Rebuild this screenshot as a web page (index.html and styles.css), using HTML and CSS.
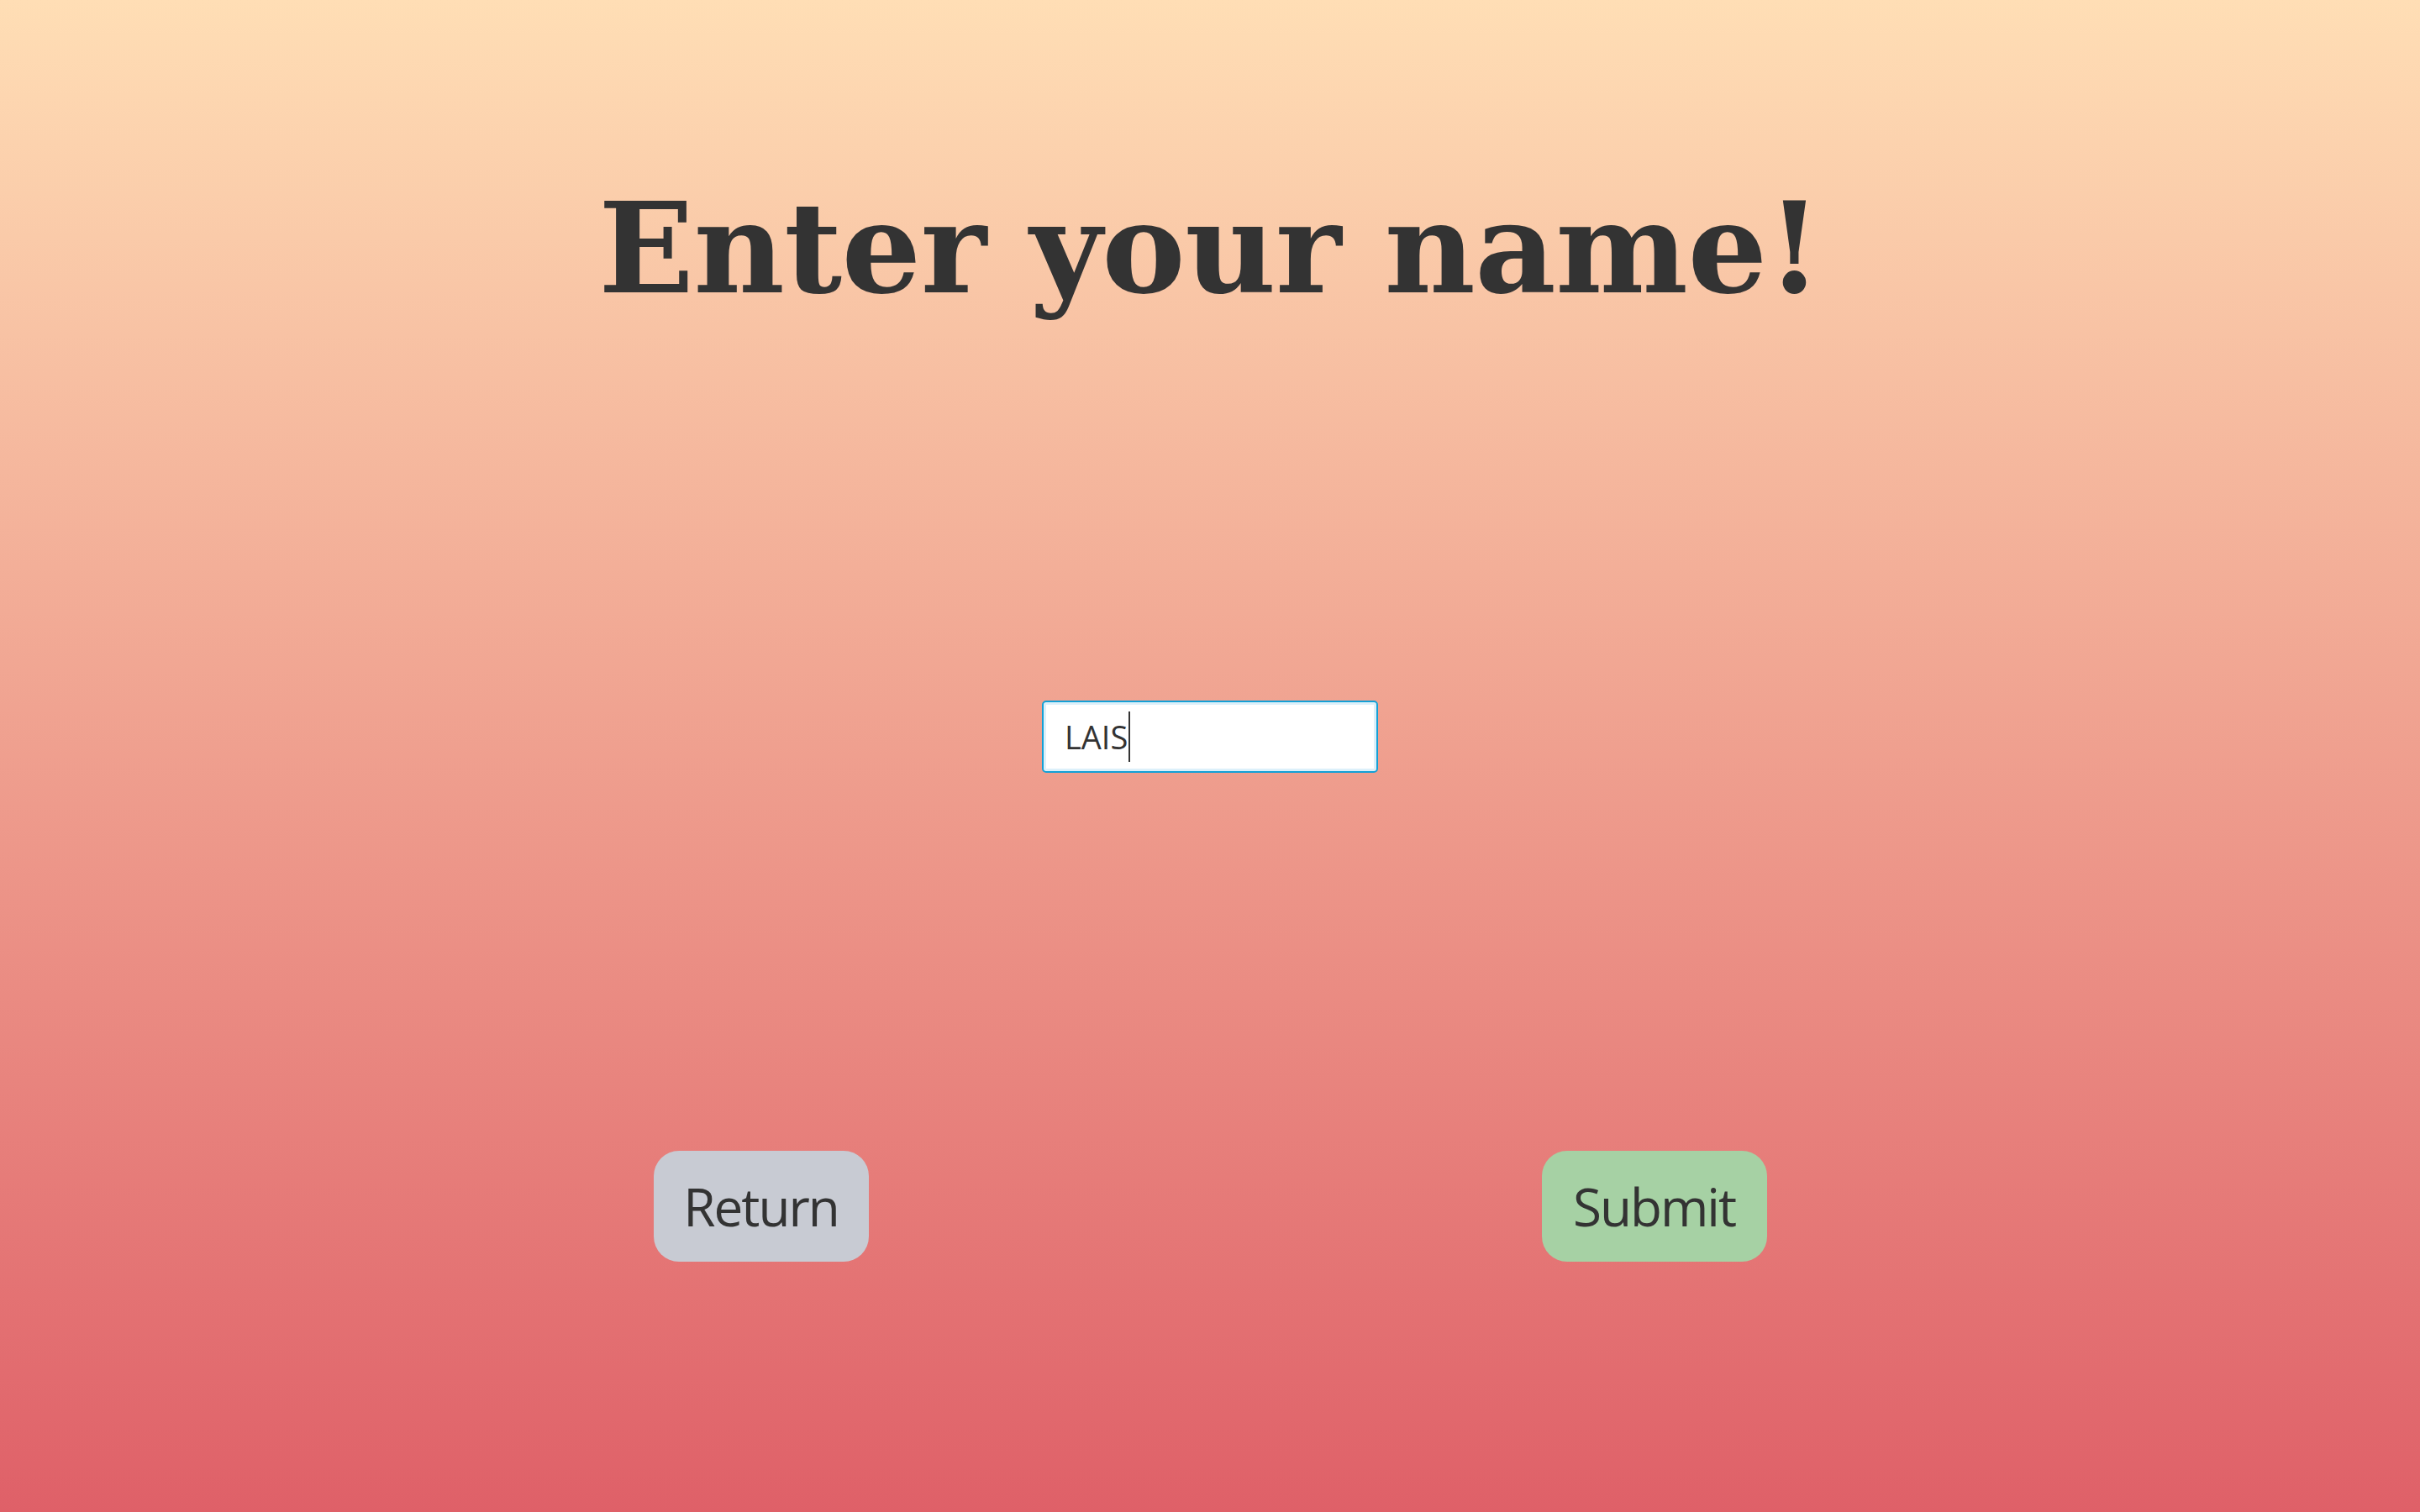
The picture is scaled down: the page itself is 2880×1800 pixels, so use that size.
FILE: index.html
```html
<!DOCTYPE html>
<html lang="en">
<head>
<meta charset="utf-8">
<title>Enter your name</title>
<link rel="stylesheet" href="styles.css">
</head>
<body>
<main class="page">
  <h1 class="title">Enter your name!</h1>
  <div class="name-field" role="textbox" aria-label="Name"><span class="name-value">LAIS</span><span class="caret"></span></div>
  <div class="actions">
    <button class="btn btn-return" type="button">Return</button>
    <button class="btn btn-submit" type="button">Submit</button>
  </div>
</main>
</body>
</html>
```
FILE: styles.css
```css
html, body {
  margin: 0;
  padding: 0;
}
body {
  width: 2880px;
  height: 1800px;
  background: linear-gradient(to bottom, #ffdeb5 0%, #df6068 100%);
  color: #333333;
  overflow: hidden;
}
.page {
  display: flex;
  flex-direction: column;
  align-items: center;
  padding-top: 212px;
  box-sizing: border-box;
  height: 1800px;
}
.title {
  margin: 0;
  font-family: "DejaVu Serif", "Liberation Serif", serif;
  font-weight: 700;
  font-size: 149px;
  line-height: 168px;
  letter-spacing: -0.5px;
  color: #333333;
  white-space: nowrap;
}
.name-field {
  margin-top: 454px;
  box-sizing: border-box;
  width: 400px;
  height: 86px;
  border: 2px solid #14a0d6;
  border-radius: 5px;
  background: #ffffff;
  box-shadow: inset 0 0 0 3px #dcf0fa;
  display: flex;
  align-items: center;
  padding: 0 0 0 25px;
  font-family: "Open Sans", "Noto Sans", sans-serif;
  font-size: 38px;
  color: #333333;
}
.name-value {
  line-height: 1;
}
.caret {
  display: inline-block;
  width: 2px;
  height: 60px;
  background: #333333;
  margin-left: 1px;
}
.actions {
  margin-top: 450px;
  width: 1325px;
  display: flex;
  justify-content: space-between;
}
.btn {
  height: 132px;
  border: none;
  border-radius: 30px;
  font-family: "Open Sans", "Noto Sans", sans-serif;
  font-size: 62px;
  letter-spacing: -2px;
  color: #333333;
  padding: 0;
  cursor: pointer;
}
.btn-return {
  width: 256px;
  background: #c8cbd3;
}
.btn-submit {
  width: 268px;
  background: #a6d1a4;
}
```
